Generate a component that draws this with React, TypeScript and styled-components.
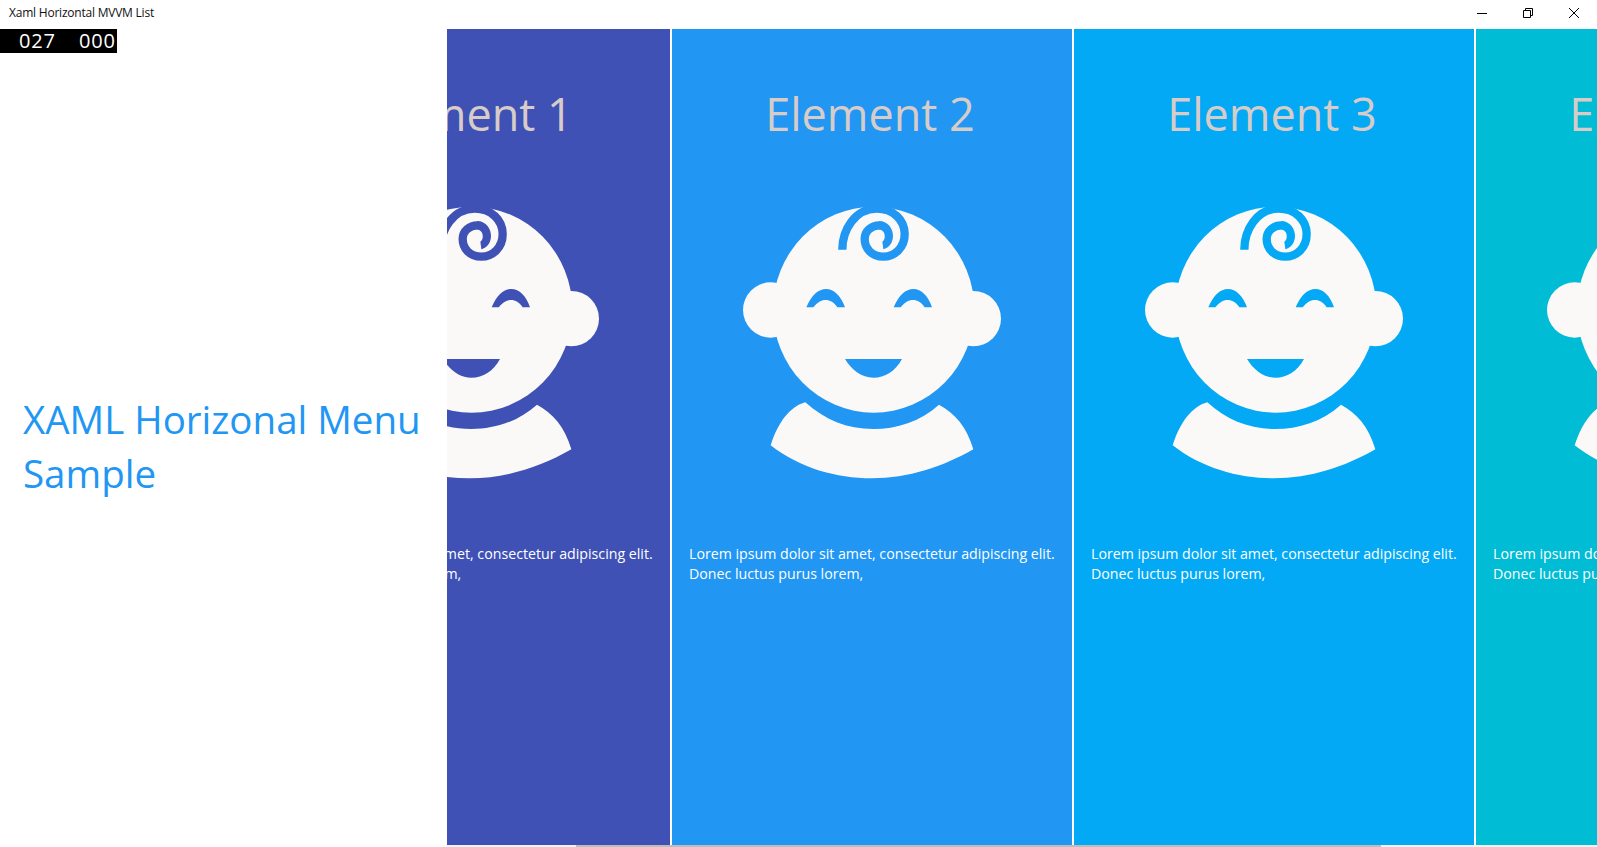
import React from "react";
import styled, { createGlobalStyle } from "styled-components";

const Global = createGlobalStyle`
  html, body { margin: 0; padding: 0; background: #fff; overflow: hidden; }
  body { font-family: "Open Sans", "Noto Sans", sans-serif; }
`;

const Window = styled.div`
  position: relative;
  width: 1597px;
  height: 847px;
  display: flex;
  flex-direction: column;
  overflow: hidden;
`;

const TitleBar = styled.header`
  height: 29px;
  flex: none;
  display: flex;
  align-items: center;
  justify-content: space-between;
  padding-left: 9px;
  box-sizing: border-box;
`;

const AppName = styled.span`
  font-size: 12px;
  letter-spacing: -0.22px;
  color: #111;
  margin-top: -4px;
`;

const Controls = styled.div`
  display: flex;
  height: 29px;
`;

const ControlButton = styled.div`
  width: 46px;
  height: 29px;
  display: flex;
  align-items: flex-start;
  justify-content: center;
  padding-top: 8px;
  box-sizing: border-box;
  svg { display: block; }
`;

const Body = styled.main`
  flex: 1;
  display: flex;
  min-height: 0;
`;

const Side = styled.section`
  width: 447px;
  flex: none;
  box-sizing: border-box;
  padding: 363px 20px 0 23px;
`;

const Heading = styled.h1`
  margin: 0;
  font-size: 38.5px;
  font-weight: 400;
  line-height: 54px;
  color: #2196f3;
`;

const Rail = styled.div`
  flex: 1;
  min-width: 0;
  overflow: hidden;
  display: flex;
  padding-bottom: 2px;
`;

const Track = styled.div`
  display: flex;
  gap: 2px;
  margin-left: -177px;
`;

const Card = styled.article<{ $bg: string }>`
  width: 400px;
  flex: none;
  background: ${(p) => p.$bg};
  box-sizing: border-box;
  display: flex;
  flex-direction: column;
`;

const CardTitle = styled.h2`
  margin: 55px 0 0;
  padding-right: 4px;
  height: 60px;
  font-size: 45px;
  line-height: 60px;
  font-weight: 400;
  text-align: center;
  color: #d7ccc8;
`;

const Baby = styled.svg`
  display: block;
  width: 280px;
  height: 300px;
  margin: 46px 0 0 58px;
  flex: none;
`;

const CardText = styled.p`
  margin: 54px 12px 0 17px;
  font-size: 14.2px;
  line-height: 20px;
  color: #fff;
`;

const Counter = styled.div`
  position: absolute;
  left: 0;
  top: 29px;
  width: 117px;
  height: 24px;
  background: #000;
  color: #fff;
  font-size: 20px;
  line-height: 24px;
  letter-spacing: 0.8px;
`;

const CounterValue = styled.span<{ $left: number }>`
  position: absolute;
  top: 0;
  left: ${(p) => p.$left}px;
`;

const ScrollTrack = styled.div`
  position: absolute;
  left: 447px;
  right: 0;
  bottom: 0;
  height: 2px;
  background: #f2f2f2;
`;

const ScrollThumb = styled.div`
  position: absolute;
  left: 129px;
  width: 805px;
  top: 0;
  height: 2px;
  background: #bdbdbd;
`;

const BabyIcon = ({ color }: { color: string }) => (
  <Baby viewBox="0 0 840 900">
    <g fill="#fbf9f8">
      <ellipse cx="431" cy="359" rx="302" ry="309" />
      <circle cx="122" cy="360" r="83" />
      <circle cx="730" cy="386" r="83" />
      <path d="M226 637C180 650 145 695 122 766C210 835 320 865 425 865C535 865 640 830 730 778C710 710 675 670 627 644C570 695 500 717 430 717C350 717 285 690 226 637Z" />
    </g>
    <g fill={color}>
      <path d="M229 352C245 315 265 297 288 297C312 297 333 318 345 352L322 352C312 337 300 330 287 330C273 330 261 338 250 352Z" />
      <path d="M491 352C507 315 527 297 550 297C574 297 595 318 606 352L584 352C574 337 562 330 549 330C535 330 523 338 512 352Z" />
      <path d="M345 507L516 507C495 545 465 563 430 563C395 563 365 540 345 507Z" />
      <path d="M447 93C475 93 490 118 489 140C487 160 478 172 460 178L457 155C465 150 466 138 462 128C458 120 452 119 447 119Z" />
    </g>
    <path
      fill="none"
      stroke={color}
      strokeWidth="25"
      d="M337 179C337 120 375 56 440 56C490 56 524 90 524 132C524 172 495 200 460 200C425 200 404 175 404 147C404 122 425 106 448 106"
    />
  </Baby>
);

const cards = [
  { n: 1, bg: "#3f51b5" },
  { n: 2, bg: "#2196f3" },
  { n: 3, bg: "#03a9f4" },
  { n: 4, bg: "#00bcd4" },
];

export default function App() {
  return (
    <>
      <Global />
      <Window>
        <TitleBar>
          <AppName>Xaml Horizontal MVVM List</AppName>
          <Controls>
            <ControlButton>
              <svg width="10" height="10" viewBox="0 0 10 10"><path d="M0 5.5H10" stroke="#000" fill="none" /></svg>
            </ControlButton>
            <ControlButton>
              <svg width="10" height="10" viewBox="0 0 10 10"><path d="M.5 2.5H7.5V9.5H.5ZM2.5 2.5V.5H9.5V7.5H7.5" stroke="#000" fill="none" /></svg>
            </ControlButton>
            <ControlButton>
              <svg width="10" height="10" viewBox="0 0 10 10"><path d="M0 0L10 10M10 0L0 10" stroke="#000" fill="none" /></svg>
            </ControlButton>
          </Controls>
        </TitleBar>
        <Body>
          <Side>
            <Heading>XAML Horizonal Menu Sample</Heading>
          </Side>
          <Rail>
            <Track>
              {cards.map((c) => (
                <Card key={c.n} $bg={c.bg}>
                  <CardTitle>Element {c.n}</CardTitle>
                  <BabyIcon color={c.bg} />
                  <CardText>Lorem ipsum dolor sit amet, consectetur adipiscing elit. Donec luctus purus lorem,</CardText>
                </Card>
              ))}
            </Track>
          </Rail>
        </Body>
        <Counter>
          <CounterValue $left={19}>027</CounterValue>
          <CounterValue $left={79}>000</CounterValue>
        </Counter>
        <ScrollTrack><ScrollThumb /></ScrollTrack>
      </Window>
    </>
  );
}
